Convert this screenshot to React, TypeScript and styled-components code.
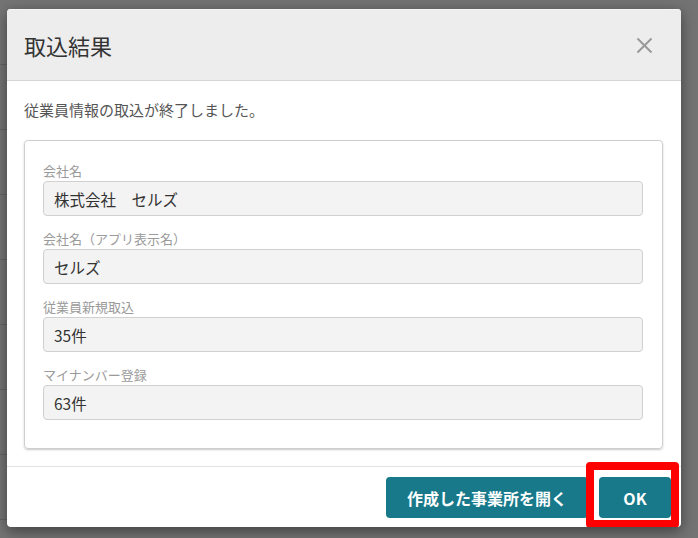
import React from "react";
import styled, { createGlobalStyle } from "styled-components";

const Global = createGlobalStyle`
  html, body { margin: 0; padding: 0; }
  body {
    background: #727272;
    font-family: "Noto Sans CJK JP", "Noto Sans", sans-serif;
    width: 698px;
    height: 538px;
    overflow: hidden;
  }
`;

const Backdrop = styled.div`
  width: 698px;
  height: 538px;
  padding: 9px 0 0 7px;
  box-sizing: border-box;
  background-color: #737373;
  background-image: repeating-linear-gradient(
    to bottom,
    #747474 0px,
    #747474 64px,
    #646464 64px,
    #646464 65px
  );
  background-size: 7px 100%;
  background-repeat: no-repeat;
`;

const Dialog = styled.div`
  width: 674px;
  height: 518px;
  background: #fff;
  border-radius: 4px;
  box-shadow: 0 4px 14px rgba(0, 0, 0, 0.45);
  display: flex;
  flex-direction: column;
  overflow: hidden;
`;

const Header = styled.div`
  height: 72px;
  box-sizing: border-box;
  background: #ededed;
  border-top: 1px solid #f6f6f6;
  border-bottom: 1px solid #d4d4d4;
  display: flex;
  align-items: center;
  justify-content: space-between;
  padding: 0 28px 0 17px;
`;

const Title = styled.h1`
  margin: 0;
  font-size: 22px;
  font-weight: 400;
  color: #333;
  line-height: 1;
`;

const Close = styled.button`
  border: none;
  background: none;
  padding: 0;
  width: 18px;
  height: 18px;
  display: flex;
  align-items: center;
  justify-content: center;
  cursor: pointer;
`;

const Body = styled.div`
  flex: 1;
  padding: 19px 18px 0 17px;
  display: flex;
  flex-direction: column;
`;

const Message = styled.p`
  margin: 0;
  font-size: 15px;
  line-height: 20px;
  color: #555;
`;

const Card = styled.div`
  margin-top: 20px;
  border: 1px solid #cfcfcf;
  border-radius: 4px;
  box-shadow: 0 1px 2px rgba(0, 0, 0, 0.22);
  padding: 20px 19px 28px 18px;
  display: flex;
  flex-direction: column;
  gap: 13px;
`;

const Field = styled.div`
  display: flex;
  flex-direction: column;
`;

const Label = styled.div`
  font-size: 13px;
  line-height: 20px;
  color: #9a9a9a;
`;

const Value = styled.div`
  height: 35px;
  box-sizing: border-box;
  background: #f3f3f3;
  border: 1px solid #d0d0d0;
  border-radius: 4px;
  padding: 0 10px;
  display: flex;
  align-items: center;
  font-size: 15.5px;
  color: #333;
`;

const Footer = styled.div`
  border-top: 1px solid #e3e3e3;
  padding: 10px 10px 9px;
  display: flex;
  justify-content: flex-end;
  gap: 11px;
`;

const Button = styled.button<{ $wide?: boolean }>`
  height: 41px;
  padding: 0 ${(p) => (p.$wide ? "16px" : "24px")};
  min-width: ${(p) => (p.$wide ? "202px" : "72px")};
  border: none;
  border-radius: 4px;
  background: #17798a;
  color: #fff;
  font-family: "Noto Sans CJK JP", "Noto Sans", sans-serif;
  font-size: 16px;
  font-weight: 700;
  cursor: pointer;
`;

const Highlight = styled.div`
  position: relative;
`;

const RedFrame = styled.div`
  position: absolute;
  left: -13px;
  top: -15px;
  right: -8px;
  bottom: -10px;
  border: 8px solid #f00;
  border-radius: 4px;
  pointer-events: none;
`;

const fields = [
  { label: "会社名", value: "株式会社　セルズ" },
  { label: "会社名（アプリ表示名）", value: "セルズ" },
  { label: "従業員新規取込", value: "35件" },
  { label: "マイナンバー登録", value: "63件" },
];

export default function App() {
  return (
    <>
      <Global />
      <Backdrop>
        <Dialog>
          <Header>
            <Title>取込結果</Title>
            <Close aria-label="close">
              <svg width="17" height="17" viewBox="0 0 17 17">
                <path
                  d="M1.5 1.5 L15.5 15.5 M15.5 1.5 L1.5 15.5"
                  stroke="#999"
                  strokeWidth="2"
                  fill="none"
                />
              </svg>
            </Close>
          </Header>
          <Body>
            <Message>従業員情報の取込が終了しました。</Message>
            <Card>
              {fields.map((f) => (
                <Field key={f.label}>
                  <Label>{f.label}</Label>
                  <Value>{f.value}</Value>
                </Field>
              ))}
            </Card>
          </Body>
          <Footer>
            <Button $wide>作成した事業所を開く</Button>
            <Highlight>
              <Button>OK</Button>
              <RedFrame />
            </Highlight>
          </Footer>
        </Dialog>
      </Backdrop>
    </>
  );
}
